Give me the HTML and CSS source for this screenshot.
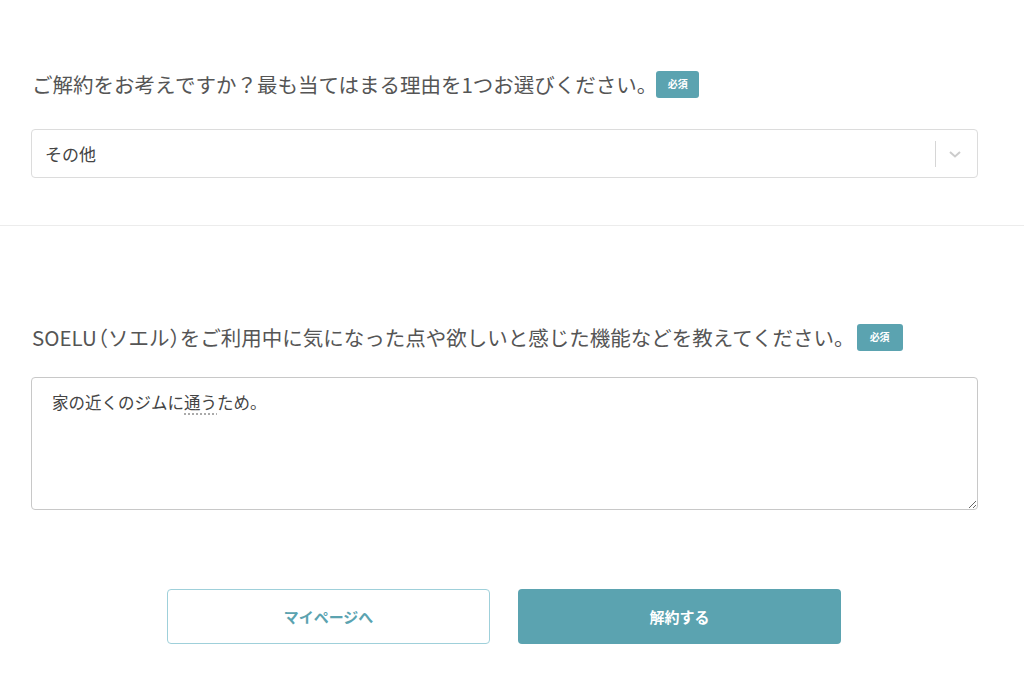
FILE: index.html
```html
<!DOCTYPE html>
<html lang="ja">
<head>
<meta charset="utf-8">
<link rel="stylesheet" href="styles.css">
</head>
<body>
<div class="page">
  <section class="block first">
    <div class="label">ご解約をお考えですか？最も当てはまる理由を1つお選びください。<span class="badge">必須</span></div>
    <div class="select">
      <span class="select-value">その他</span>
      <span class="select-ind">
        <span class="sep"></span>
        <svg class="chev" width="14" height="10" viewBox="0 0 14 10"><path d="M2 3 L7 7.5 L12 3" fill="none" stroke="#cccccc" stroke-width="2"/></svg>
      </span>
    </div>
  </section>
  <hr class="divider">
  <section class="block second">
    <div class="label">SOELU<span class="paren open">（</span>ソエル<span class="paren close">）</span>をご利用中に気になった点や欲しいと感じた機能などを教えてください。<span class="badge wide">必須</span></div>
    <div class="textarea">家の近くのジムに<span class="spell">通う</span>ため。</div>
    <div class="buttons">
      <button class="btn outline">マイページへ</button>
      <button class="btn solid">解約する</button>
    </div>
  </section>
</div>
</body>
</html>
```

FILE: styles.css
```css
* { box-sizing: border-box; }
html, body { margin: 0; padding: 0; background: #fff; }
body {
  font-family: "Noto Sans CJK JP", "Noto Sans", sans-serif;
  color: #555;
  width: 1024px;
  height: 683px;
  overflow: hidden;
}
.block { padding: 0 46px 0 31px; }
.first { padding-top: 69px; }
.label {
  font-size: 20.5px;
  line-height: 30px;
  display: flex;
  align-items: center;
  padding-left: 1px;
  white-space: nowrap;
}
.paren { font-feature-settings: "halt"; }
.paren.open { margin-left: 1px; }
.paren.close { margin-right: 0; }
.badge {
  display: inline-flex;
  align-items: center;
  justify-content: center;
  margin-left: -1px;
  background: #5ba3b0;
  color: #fff;
  font-size: 10px;
  font-weight: bold;
  width: 43px;
  height: 27px;
  border-radius: 3px;
}
.badge.wide { margin-left: 2px; width: 46px; }
.select {
  margin-top: 30px;
  height: 49px;
  border: 1px solid #dcdcdc;
  border-radius: 4px;
  display: flex;
  align-items: center;
  justify-content: space-between;
  padding-left: 13px;
}
.select-value { font-size: 17px; color: #444; }
.select-ind { display: flex; align-items: center; height: 100%; }
.sep { width: 1px; height: 26px; background: #d6d6d6; }
.chev { margin: 0 15px 0 12px; }
.divider {
  border: 0;
  border-top: 1px solid #ececec;
  margin: 47px 0 0;
}
.second { padding-top: 96px; }
.textarea {
  margin-top: 25px;
  height: 133px;
  border: 1px solid #c8c8c8;
  border-radius: 4px;
  padding: 10px 20px;
  font-size: 16.5px;
  line-height: 28px;
  color: #444;
  resize: both;
  overflow: auto;
}
.spell { text-decoration: underline dotted #999; text-underline-offset: 5px; }
.buttons {
  display: flex;
  justify-content: center;
  gap: 28px;
  margin-top: 79px;
  padding-right: 1px;
}
.btn {
  width: 323px;
  height: 55px;
  border-radius: 4px;
  font-family: "Noto Sans CJK JP", sans-serif;
  font-size: 15px;
  font-weight: bold;
  cursor: pointer;
}
.outline { background: #fff; border: 1.5px solid #9fd0da; color: #5ba3b0; }
.solid { background: #5ba3b0; border: 0; color: #fff; }
```
